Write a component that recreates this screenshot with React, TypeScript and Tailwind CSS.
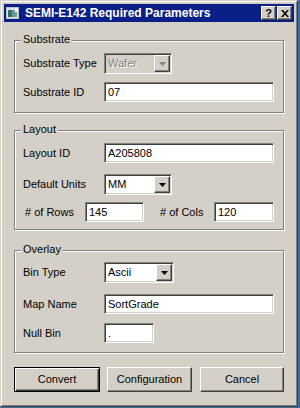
import React from "react";

const raised =
  "border border-t-white border-l-white border-b-[#404040] border-r-[#404040] shadow-[inset_-1px_-1px_0_#808080]";
const sunken =
  "border border-t-[#808080] border-l-[#808080] border-b-white border-r-white shadow-[inset_1px_1px_0_#404040,inset_-1px_-1px_0_#d4d0c8]";

function Group({ title, className, children }: { title: string; className?: string; children: React.ReactNode }) {
  return (
    <div
      className={
        "relative ml-[10px] w-[270px] border border-[#808080] shadow-[inset_1px_1px_0_#fff,1px_1px_0_#fff] " +
        (className ?? "")
      }
    >
      <span className="absolute -top-[8px] left-[6px] bg-[#d4d0c8] px-[2px] leading-[13px]">{title}</span>
      {children}
    </div>
  );
}

function Field({ value, width }: { value: string; width: string }) {
  return (
    <input
      readOnly
      value={value}
      className={`h-[20px] ${width} bg-white px-[3px] text-[11px] text-black outline-none ${sunken}`}
    />
  );
}

function Arrow({ color }: { color: string }) {
  return (
    <svg width="7" height="4" viewBox="0 0 7 4">
      <path d="M0 0h7L3.5 4z" fill={color} />
    </svg>
  );
}

function Combo({ value, width, disabled }: { value: string; width: string; disabled?: boolean }) {
  return (
    <div className={`flex h-[21px] ${width} items-center ${sunken} ${disabled ? "bg-[#d4d0c8]" : "bg-white"}`}>
      <span
        className={
          "flex-1 pl-[3px] " + (disabled ? "text-[#808080] [text-shadow:1px_1px_0_#fff]" : "text-black")
        }
      >
        {value}
      </span>
      <span className={`mr-px flex h-[17px] w-[16px] items-center justify-center bg-[#d4d0c8] ${raised}`}>
        <Arrow color={disabled ? "#808080" : "#000"} />
      </span>
    </div>
  );
}

function Row({ label, children, className }: { label: string; children: React.ReactNode; className?: string }) {
  return (
    <div className={"flex items-center pl-[8px] " + (className ?? "")}>
      <span className="w-[81px]">{label}</span>
      {children}
    </div>
  );
}

export default function App() {
  return (
    <div className="h-[408px] w-[300px] bg-[#3a6ea5] font-['Liberation_Sans',Arial,sans-serif] text-[11px] text-black">
      <div className="h-[407px] w-[298px] border border-t-[#d4d0c8] border-l-[#d4d0c8] border-b-[#404040] border-r-[#404040] bg-[#d4d0c8]">
        <div className="flex h-full flex-col border border-t-white border-l-white border-b-[#808080] border-r-[#808080] p-[2px]">
          {/* Title bar */}
          <div className="flex h-[18px] items-center bg-[#0a2088] pl-[2px] pr-[2px]">
            <svg width="14" height="12" viewBox="0 0 14 12" className="mr-[5px]">
              <rect x="0.5" y="0.5" width="12" height="11" fill="#e0e0e0" stroke="#c0c0c0" />
              <rect x="2" y="3" width="9" height="7" fill="#6f9a9a" />
              <rect x="2" y="3" width="4" height="7" fill="#2f7070" />
              <rect x="9" y="1" width="2" height="4" fill="#fff" />
            </svg>
            <span className="flex-1 text-[12px] font-bold text-white">SEMI-E142 Required Parameters</span>
            <div className="flex gap-[1px]">
              <span className={`flex h-[14px] w-[15px] items-center justify-center bg-[#d4d0c8] text-[11px] font-bold leading-none ${raised}`}>
                ?
              </span>
              <span className={`flex h-[14px] w-[15px] items-center justify-center bg-[#d4d0c8] ${raised}`}>
                <svg width="8" height="7" viewBox="0 0 8 7">
                  <path d="M0 0h2l2 2.2L6 0h2L5 3.5 8 7H6L4 4.8 2 7H0l3-3.5z" fill="#000" />
                </svg>
              </span>
            </div>
          </div>

          <Group title="Substrate" className="mt-[18px] pt-[12px] pb-[10px]">
            <Row label="Substrate Type">
              <Combo value="Wafer" width="w-[68px]" disabled />
            </Row>
            <Row label="Substrate ID" className="mt-[8px]">
              <Field value="07" width="w-[170px]" />
            </Row>
          </Group>

          <Group title="Layout" className="mt-[17px] pt-[12px] pb-[7px]">
            <Row label="Layout ID">
              <Field value="A205808" width="w-[170px]" />
            </Row>
            <Row label="Default Units" className="mt-[11px]">
              <Combo value="MM" width="w-[68px]" />
            </Row>
            <div className="mt-[7px] flex items-center pl-[10px]">
              <span className="w-[60px]">#&nbsp;of Rows</span>
              <Field value="145" width="w-[59px]" />
              <span className="ml-[16px] w-[54px]">#&nbsp;of Cols</span>
              <Field value="120" width="w-[60px]" />
            </div>
          </Group>

          <Group title="Overlay" className="mt-[20px] pt-[11px] pb-[9px]">
            <Row label="Bin Type">
              <Combo value="Ascii" width="w-[70px]" />
            </Row>
            <Row label="Map Name" className="mt-[11px]">
              <Field value="SortGrade" width="w-[170px]" />
            </Row>
            <Row label="Null Bin" className="mt-[9px]">
              <Field value="." width="w-[50px]" />
            </Row>
          </Group>

          <div className="ml-[10px] mt-[14px] flex">
            <button className="h-[25px] w-[86px] border border-black bg-[#d4d0c8] shadow-[inset_1px_1px_0_#fff,inset_-1px_-1px_0_#404040,inset_-2px_-2px_0_#808080]">
              Convert
            </button>
            <button className={`ml-[7px] h-[25px] w-[85px] bg-[#d4d0c8] ${raised}`}>Configuration</button>
            <button className={`ml-[8px] h-[25px] w-[84px] bg-[#d4d0c8] ${raised}`}>Cancel</button>
          </div>
        </div>
      </div>
    </div>
  );
}
